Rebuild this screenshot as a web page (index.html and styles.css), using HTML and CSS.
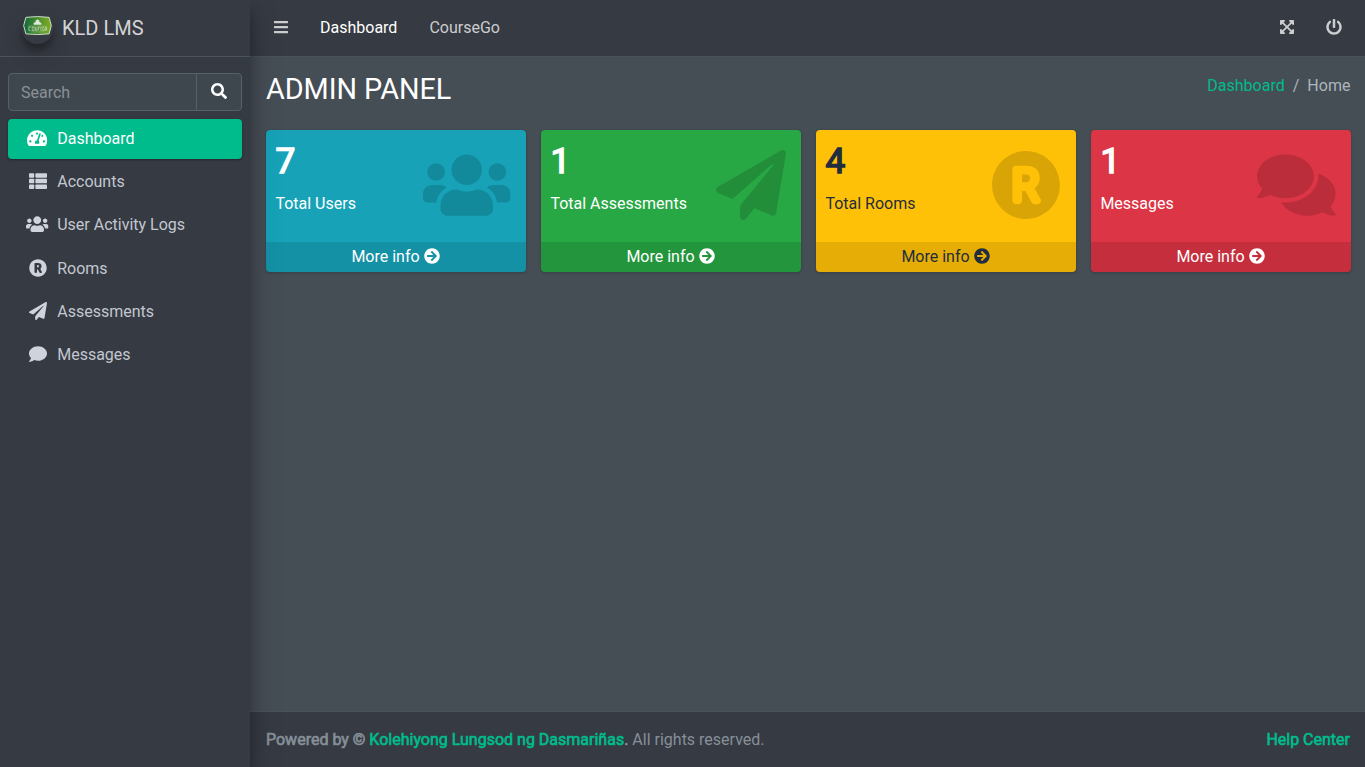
FILE: index.html
```html
<!DOCTYPE html>
<html lang="en">
<head>
<meta charset="utf-8">
<title>KLD LMS</title>
<link rel="stylesheet" href="styles.css">
</head>
<body>
<svg class="sprite" aria-hidden="true">
<symbol id="bars" viewBox="0 0 448 512"><path d="M16 132h416c8.800 0 16-7.200 16-16V76c0-8.800-7.200-16-16-16H16C7.200 60 0 67.200 0 76v40c0 8.800 7.200 16 16 16zm0 160h416c8.800 0 16-7.200 16-16v-40c0-8.800-7.200-16-16-16H16c-8.800 0-16 7.200-16 16v40c0 8.800 7.200 16 16 16zm0 160h416c8.800 0 16-7.200 16-16v-40c0-8.800-7.200-16-16-16H16c-8.800 0-16 7.200-16 16v40c0 8.800 7.200 16 16 16z"/></symbol>
<symbol id="users" viewBox="0 0 640 512"><path d="M96 224c35.300 0 64-28.700 64-64s-28.700-64-64-64-64 28.700-64 64 28.700 64 64 64zm448 0c35.300 0 64-28.700 64-64s-28.700-64-64-64-64 28.700-64 64 28.700 64 64 64zm32 32h-64c-17.600 0-33.500 7.100-45.100 18.600 40.300 22.100 68.900 62 75.100 109.400h66c17.700 0 32-14.300 32-32v-32c0-35.300-28.700-64-64-64zm-256 0c61.900 0 112-50.100 112-112S381.900 32 320 32 208 82.100 208 144s50.100 112 112 112zm76.800 32h-8.300c-20.800 10-43.900 16-68.500 16s-47.600-6-68.500-16h-8.300C179.600 288 128 339.600 128 403.200V432c0 26.500 21.500 48 48 48h288c26.500 0 48-21.500 48-48v-28.800c0-63.600-51.600-115.200-115.200-115.200zm-223.700-13.400C161.500 263.100 145.600 256 128 256H64c-35.300 0-64 28.700-64 64v32c0 17.700 14.300 32 32 32h65.900c6.300-47.400 34.900-87.300 75.200-109.400z"/></symbol>
<symbol id="plane" viewBox="0 0 512 512"><path d="M476 3.200L12.500 270.600c-18.100 10.400-15.800 35.600 2.200 43.200L121 358.400l287.300-253.200c5.500-4.900 13.300 2.600 8.600 8.300L176 407v80.500c0 23.600 28.500 32.900 42.500 15.800L282 426l124.600 52.200c14.200 6 30.400-2.900 33-18.200l72-432C515 7.800 493.300-6.800 476 3.200z"/></symbol>
<symbol id="registered" viewBox="0 0 512 512"><path d="M285.363 207.475c0 18.600-9.831 28.431-28.431 28.431h-29.876v-56.140h23.378c28.668 0 34.929 8.773 34.929 27.709zM504 256c0 136.967-111.033 248-248 248S8 392.967 8 256 119.033 8 256 8s248 111.033 248 248zM363.411 360.414c-46.729-84.825-43.299-78.636-44.702-80.980 23.432-15.172 37.945-42.979 37.945-74.486 0-54.244-31.500-89.252-105.498-89.252h-70.667c-13.255 0-24 10.745-24 24V372c0 13.255 10.745 24 24 24h22.567c13.255 0 24-10.745 24-24v-71.663h25.556l44.129 82.937a24 24 0 0 0 21.188 12.727h24.464c18.261-.001 29.829-19.591 21.018-35.587z"/></symbol>
<symbol id="comments" viewBox="0 0 576 512"><path d="M416 192c0-88.400-93.100-160-208-160S0 103.600 0 192c0 34.300 14.100 65.900 38 92-13.400 30.200-35.500 54.200-35.800 54.500-2.200 2.300-2.800 5.700-1.500 8.700S4.800 352 8 352c36.600 0 66.900-12.300 88.700-25 32.200 15.700 70.300 25 111.300 25 114.900 0 208-71.600 208-160zm122 220c23.900-26 38-57.700 38-92 0-66.900-53.500-124.200-129.300-148.100.9 6.600 1.300 13.300 1.300 20.100 0 105.900-107.700 192-240 192-10.800 0-21.300-.8-31.700-1.900C207.800 439.600 281.800 480 368 480c41 0 79.100-9.200 111.300-25 21.800 12.700 52.100 25 88.700 25 3.200 0 6.100-1.900 7.300-4.800 1.300-2.900.7-6.300-1.500-8.700-.3-.3-22.400-24.200-35.800-54.500z"/></symbol>
<symbol id="comment" viewBox="0 0 512 512"><path d="M256 32C114.600 32 0 125.100 0 240c0 49.600 21.400 95 57 130.700C44.500 421.100 2.700 466 2.200 466.500c-2.200 2.300-2.800 5.700-1.500 8.700S4.800 480 8 480c66.300 0 116-31.800 140.600-51.400 32.700 12.300 69 19.400 107.400 19.400 141.400 0 256-93.100 256-208S397.400 32 256 32z"/></symbol>
<symbol id="gauge" viewBox="0 0 576 512"><path d="M288 32C128.940 32 0 160.940 0 320c0 52.800 14.250 102.260 39.060 144.800 5.610 9.620 16.300 15.200 27.440 15.200h443c11.140 0 21.830-5.580 27.440-15.200C561.750 422.260 576 372.800 576 320c0-159.060-128.940-288-288-288zm0 64c14.710 0 26.580 10.130 30.320 23.650-1.110 2.260-2.640 4.230-3.450 6.670l-9.220 27.670c-5.130 3.490-10.970 6.010-17.640 6.010-17.670 0-32-14.330-32-32S270.330 96 288 96zM96 384c-17.670 0-32-14.330-32-32s14.330-32 32-32 32 14.330 32 32-14.330 32-32 32zm48-160c-17.670 0-32-14.330-32-32s14.330-32 32-32 32 14.330 32 32-14.330 32-32 32zm246.770-72.410l-61.330 184C343.130 347.330 352 364.540 352 384c0 11.720-3.380 22.550-8.880 32H232.880c-5.500-9.450-8.880-20.280-8.880-32 0-33.940 26.500-61.430 59.900-63.590l61.340-184.010c4.170-12.560 17.730-19.450 30.360-15.170 12.570 4.190 19.350 17.790 15.170 30.360zm14.660 57.200l15.520-46.550c3.470-1.290 7.130-2.230 11.050-2.230 17.670 0 32 14.330 32 32s-14.330 32-32 32c-11.380-.01-20.890-6.280-26.570-15.220zM480 384c-17.670 0-32-14.330-32-32s14.330-32 32-32 32 14.330 32 32-14.330 32-32 32z"/></symbol>
<symbol id="list" viewBox="0 0 512 512"><rect y="32" width="149.300" height="128" rx="24"/><rect y="192" width="149.300" height="128" rx="24"/><rect y="352" width="149.300" height="128" rx="24"/><rect x="181.300" y="32" width="330.700" height="128" rx="24"/><rect x="181.300" y="192" width="330.700" height="128" rx="24"/><rect x="181.300" y="352" width="330.700" height="128" rx="24"/></symbol>
<symbol id="search" viewBox="0 0 512 512"><path d="M505 442.700L405.300 343c-4.500-4.500-10.600-7-17-7H372c27.600-35.300 44-79.700 44-128C416 93.100 322.900 0 208 0S0 93.100 0 208s93.100 208 208 208c48.300 0 92.700-16.400 128-44v16.300c0 6.400 2.500 12.500 7 17l99.700 99.700c9.400 9.400 24.600 9.400 33.900 0l28.300-28.300c9.400-9.400 9.400-24.600.1-34zM208 336c-70.700 0-128-57.200-128-128 0-70.700 57.200-128 128-128 70.700 0 128 57.200 128 128 0 70.700-57.200 128-128 128z"/></symbol>
<symbol id="arrow" viewBox="0 0 512 512"><path d="M256 8c137 0 248 111 248 248S393 504 256 504 8 393 8 256 119 8 256 8zm-28.900 143.600l75.500 72.400H120c-13.300 0-24 10.700-24 24v16c0 13.300 10.700 24 24 24h182.600l-75.500 72.400c-9.700 9.300-9.900 24.800-.4 34.300l11 10.900c9.400 9.400 24.600 9.400 33.900 0L404.300 273c9.400-9.400 9.400-24.600 0-33.900L271.600 106.300c-9.400-9.400-24.600-9.400-33.900 0l-11 10.900c-9.500 9.600-9.300 25.100.4 34.400z"/></symbol>
<symbol id="power" viewBox="0 0 512 512"><path d="M400 54.100c63 45 104 118.600 104 201.900 0 136.800-110.800 247.700-247.500 248C120 504.300 8.200 393 8 256.400 7.900 173.100 48.900 99.300 111.800 54.200c11.700-8.300 28-4.800 35 7.700L162.600 90c5.900 10.500 3.100 23.800-6.600 31-41.500 30.800-68 79.600-68 134.900-.1 92.300 74.500 168.100 168 168.100 91.600 0 168.600-74.200 168-169.100-.3-51.800-24.700-101.800-68.100-134-9.700-7.200-12.400-20.500-6.500-30.900l15.800-28.100c7-12.400 23.200-16.100 34.800-7.800zM296 264V24c0-13.300-10.700-24-24-24h-32c-13.300 0-24 10.700-24 24v240c0 13.300 10.700 24 24 24h32c13.300 0 24-10.700 24-24z"/></symbol>
<symbol id="expand" viewBox="0 0 448 512"><path d="M448 344v112a24 24 0 0 1-24 24H312c-21.390 0-32.090-25.900-17-41l36.200-36.200L224 295.600 116.770 402.900 153 439c15.090 15.100 4.390 41-17 41H24a24 24 0 0 1-24-24V344c0-21.400 25.890-32.100 41-17l36.190 36.200L184.460 256 77.180 148.700 41 185c-15.100 15.100-41 4.400-41-17V56a24 24 0 0 1 24-24h112c21.390 0 32.090 25.900 17 41l-36.200 36.200L224 216.400l107.230-107.300L295 73c-15.090-15.100-4.390-41 17-41h112a24 24 0 0 1 24 24v112c0 21.400-25.890 32.100-41 17l-36.190-36.200L263.540 256l107.280 107.300L407 327.100c15.100-15.200 41-4.500 41 16.900z"/></symbol>
</svg>
<div class="wrapper">
  <aside class="sidebar">
    <a class="brand"><span class="brand-img"><svg viewBox="0 0 30 30"><defs><linearGradient id="lg"><stop offset="0" stop-color="#12693c"/><stop offset="1" stop-color="#7fae22"/></linearGradient></defs><path d="M3 5.500Q15 3.800 27 5.500L29.300 14.500 27 23.500Q15 25 3 23.500L.7 14.500z" transform="translate(0 -2.800) scale(1 .95)" fill="url(#lg)" stroke="#d5e2d0"/><path d="M11 10V8.200L13 7.200V6L15 4.500 17 6V7.200L19 8.200V10z" fill="#dbe8d5"/><path d="M5.500 11.500h19M8 17.500h14" stroke="#a9c79a" stroke-width=".5"/><path d="M8 12.500H6v3.500h2M9.500 12.500h2v3.500h-2zM13 12.500V16h1.500v-3.500M16 16v-3.500h1.500M19.500 12.500h-1V16h1M22 12.500h-1.500V16H22v-2M23.200 12.500h1.300V16h-1.300z" fill="none" stroke="#c9dcbc" stroke-width=".7"/></svg></span><span>KLD LMS</span></a>
    <div class="side-body">
      <div class="search"><input placeholder="Search"><button><svg class="icon"><use href="#search"/></svg></button></div>
      <nav class="menu">
        <a class="active"><span class="mi"><svg class="icon w18"><use href="#gauge"/></svg></span>Dashboard</a>
        <a><span class="mi"><svg class="icon"><use href="#list"/></svg></span>Accounts</a>
        <a><span class="mi"><svg class="icon w20"><use href="#users"/></svg></span>User Activity Logs</a>
        <a><span class="mi"><svg class="icon"><use href="#registered"/></svg></span>Rooms</a>
        <a><span class="mi"><svg class="icon"><use href="#plane"/></svg></span>Assessments</a>
        <a><span class="mi"><svg class="icon"><use href="#comment"/></svg></span>Messages</a>
      </nav>
    </div>
  </aside>
  <div class="main">
    <header class="navbar">
      <a><svg class="icon w14"><use href="#bars"/></svg></a><a class="on">Dashboard</a><a>CourseGo</a>
      <span class="spacer"></span>
      <a><svg class="icon w14"><use href="#expand"/></svg></a><a><svg class="icon"><use href="#power"/></svg></a>
    </header>
    <main class="content">
      <div class="head"><h1>ADMIN PANEL</h1><div class="crumbs"><a>Dashboard</a><i>/</i><span>Home</span></div></div>
      <div class="cards">
        <section class="card info"><div class="inner"><h3>7</h3><p>Total Users</p></div><svg class="big w20"><use href="#users"/></svg><a class="more">More info <svg class="icon"><use href="#arrow"/></svg></a></section>
        <section class="card success"><div class="inner"><h3>1</h3><p>Total Assessments</p></div><svg class="big"><use href="#plane"/></svg><a class="more">More info <svg class="icon"><use href="#arrow"/></svg></a></section>
        <section class="card warning"><div class="inner"><h3>4</h3><p>Total Rooms</p></div><svg class="big"><use href="#registered"/></svg><a class="more">More info <svg class="icon"><use href="#arrow"/></svg></a></section>
        <section class="card danger"><div class="inner"><h3>1</h3><p>Messages</p></div><svg class="big w18"><use href="#comments"/></svg><a class="more">More info <svg class="icon"><use href="#arrow"/></svg></a></section>
      </div>
    </main>
    <footer class="footer"><div><b>Powered by © <a>Kolehiyong Lungsod ng Dasmariñas</a>.</b> All rights reserved.</div><b><a>Help Center</a></b></footer>
  </div>
</div>
</body>
</html>
```
FILE: styles.css
```css
*{box-sizing:border-box}
body{margin:0;font:400 16px/24px Roboto,sans-serif;color:#fff;background:#454d55}
h1,h3,p{margin:0}
.sprite{display:none}
.wrapper{display:flex;height:767px;overflow:hidden}
.icon{width:1em;height:1em;fill:currentColor;flex:none;vertical-align:-2px}
.icon.w14{width:.875em}
.icon.w18{width:1.125em}
.icon.w20{width:1.25em}

.sidebar{width:250px;flex:none;background:#363a42;box-shadow:0 14px 28px rgba(0,0,0,.25),0 10px 10px rgba(0,0,0,.22);position:relative;z-index:2}
.brand{display:flex;align-items:center;height:57px;padding:0 8px 0 22px;gap:9px;border-bottom:1px solid #4b545c;font-size:20px;line-height:30px;color:rgba(255,255,255,.8)}
.brand-img{display:block;width:31px;height:31px;border-radius:50%;box-shadow:0 10px 20px rgba(0,0,0,.19),0 6px 6px rgba(0,0,0,.23)}
.brand-img svg{display:block;width:31px;height:31px;padding-top:2px}
.side-body{padding:16px 8px 0}
.search{display:flex;height:38px;border:1px solid #56606a;border-radius:4px;background:#3f474e;overflow:hidden}
.search input{flex:1;min-width:0;border:0;background:none;padding:2px 12px 0;font:inherit;color:#fff;outline:none}
.search input::placeholder{color:#8b9197;opacity:1}
.search button{width:45px;padding:0;border:0;border-left:1px solid #56606a;background:none;color:#fff;font-size:16px}
.menu{display:flex;flex-direction:column;gap:3.200px;padding-top:8px}
.menu a{display:flex;align-items:center;height:40px;padding:0 16px;color:#c2c7d0;border-radius:4px}
.menu a.active{background:#00bc8c;color:#fff;box-shadow:0 1px 3px rgba(0,0,0,.12),0 1px 2px rgba(0,0,0,.24)}
.mi{display:flex;justify-content:center;align-items:center;width:26px;height:24px;margin:0 6.600px 0 .6px;padding-bottom:2px;font-size:17.600px;color:#cfd3dc}
.active .mi{color:#fff}
.menu .icon{font-size:18px}

.main{flex:1;min-width:0;display:flex;flex-direction:column}
.navbar{display:flex;align-items:center;height:57px;padding:0 7px 0 8px;background:#363a42;border-bottom:1px solid #4b545c;color:rgba(255,255,255,.75)}
.navbar a{padding:0 16px}
.navbar .on{color:#fff}
.spacer{flex:1}
.content{flex:1;padding:15px 14px 0 16px}
.head{display:flex;justify-content:space-between;height:58px}
h1{font-size:28.800px;line-height:34.560px;font-weight:400;letter-spacing:-.05px}
.crumbs{display:flex;gap:8px;padding:2px .6px 0 0;color:#adb5bd}
.crumbs i{font-style:normal}
.crumbs a,.footer a{color:#00bc8c}
.cards{display:grid;grid-template-columns:repeat(4,1fr);gap:15px}
.card{position:relative;height:142px;border-radius:4px;display:flex;flex-direction:column;justify-content:space-between;overflow:hidden;box-shadow:0 0 1px rgba(0,0,0,.125),0 1px 3px rgba(0,0,0,.2)}
.inner{padding:10px 10px 10px 9.400px}
h3{font-size:35.200px;line-height:42px;font-weight:400;-webkit-text-stroke:1.500px currentColor;margin-bottom:10px}
.info{background:#17a2b8}
.success{background:#28a745}
.warning{background:#ffc107;color:#1f2d3d}
.danger{background:#dc3545}
.big{position:absolute;right:15.500px;top:20px;width:70px;height:70px;fill:rgba(0,0,0,.15)}
.big.w20{width:87.500px}
.big.w18{width:78.750px}
.more{height:30px;line-height:24px;padding:3px 1px 3px 0;text-align:center;background:rgba(0,0,0,.1)}

.footer{display:flex;justify-content:space-between;height:56px;padding:16px 15px 16px 16px;background:#363a42;border-top:1px solid #4b545c;color:#869099}
.footer b{font-weight:400;-webkit-text-stroke:.65px currentColor}
```
